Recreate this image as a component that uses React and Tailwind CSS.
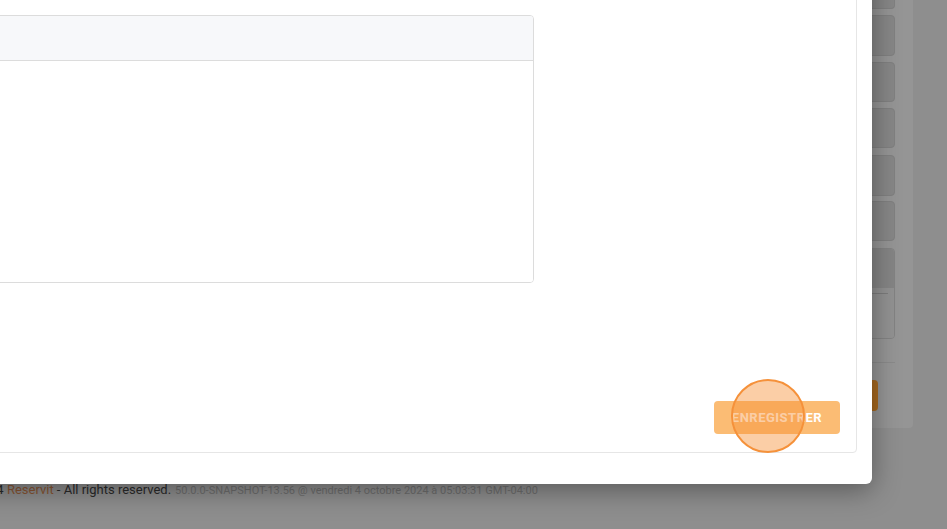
import React from "react";

export default function App() {
  return (
    <div
      className="relative w-[947px] h-[529px] overflow-hidden bg-[#8e8e8e]"
      style={{ fontFamily: "Roboto, 'Liberation Sans', sans-serif" }}
    >
      {/* Page behind the modal (already dimmed by the backdrop) */}
      <div className="flex flex-col">
        <div className="flex justify-end pr-[34px]">
          <div className="w-[260px] h-[428px] bg-[#959595] rounded-b-[4px] pl-[18px] pr-[18px] flex flex-col">
            <div className="h-[9px] bg-[#878787] border border-t-0 border-[#808080] rounded-b-[4px]" />
            <div className="mt-[6px] h-[41px] bg-[#878787] border border-[#808080] rounded-[4px]" />
            <div className="mt-[6px] h-[40px] bg-[#878787] border border-[#808080] rounded-[4px]" />
            <div className="mt-[6px] h-[40px] bg-[#878787] border border-[#808080] rounded-[4px]" />
            <div className="mt-[7px] h-[41px] bg-[#878787] border border-[#808080] rounded-[4px]" />
            <div className="mt-[5px] h-[40px] bg-[#878787] border border-[#808080] rounded-[4px]" />
            <div className="mt-[7px] h-[91px] border border-[#838383] rounded-[4px] overflow-hidden flex flex-col">
              <div className="h-[39px] bg-[#858585]" />
              <div className="flex-1 bg-[#929292] pt-[5px] pr-[6px]">
                <div className="h-px bg-[#7c7c7c]" />
              </div>
            </div>
            <div className="mt-[23px] h-px bg-[#8a8a8a]" />
            <div className="mt-[17px] flex justify-end pr-[17px]">
              <div className="w-[80px] h-[31px] bg-[#a8691f] rounded-[4px]" />
            </div>
          </div>
        </div>
        <div className="mt-[52px] h-[20px] flex items-center whitespace-nowrap ml-[-39px]">
          <span className="text-[13px] text-[#2b2b2b]">
            © 2024 <span className="text-[#8a5634]">Reservit</span> - All rights reserved.
          </span>
          <span className="text-[11px] text-[#6e6e6e] ml-[4px] mt-[2px]">
            50.0.0-SNAPSHOT-13.56 @ vendredi 4 octobre 2024 à 05:03:31 GMT-04:00
          </span>
        </div>
      </div>

      {/* Modal */}
      <div className="absolute left-[-40px] top-[-40px] w-[912px] h-[524px] bg-white rounded-[6px] shadow-[0_6px_28px_rgba(0,0,0,0.38)] flex flex-col pl-[20px] pt-[20px] pr-[15px] pb-[31px]">
        <div className="flex-1 border border-[#e6e6e6] rounded-[4px] flex flex-col">
          <div className="mt-[34px] ml-[10px] w-[543px] h-[268px] border border-[#dcdcdc] rounded-[4px] flex flex-col overflow-hidden">
            <div className="h-[45px] bg-[#f7f8fa] border-b border-[#dcdcdc]" />
            <div className="flex-1 bg-white" />
          </div>
          <div className="flex-1" />
          <div className="flex justify-end pr-[16px] pb-[18px]">
            <button
              disabled
              className="w-[126px] h-[33px] rounded-[4px] bg-[#fbbc74] text-white text-[13px] font-bold tracking-[0.5px] flex items-center justify-center"
            >
              ENREGISTRER
            </button>
          </div>
        </div>
      </div>

      {/* Click highlight */}
      <div className="absolute left-[731px] top-[379px] w-[74px] h-[74px] rounded-full border-2 border-[#f5913a] bg-[#f7923a]/45" />
    </div>
  );
}
